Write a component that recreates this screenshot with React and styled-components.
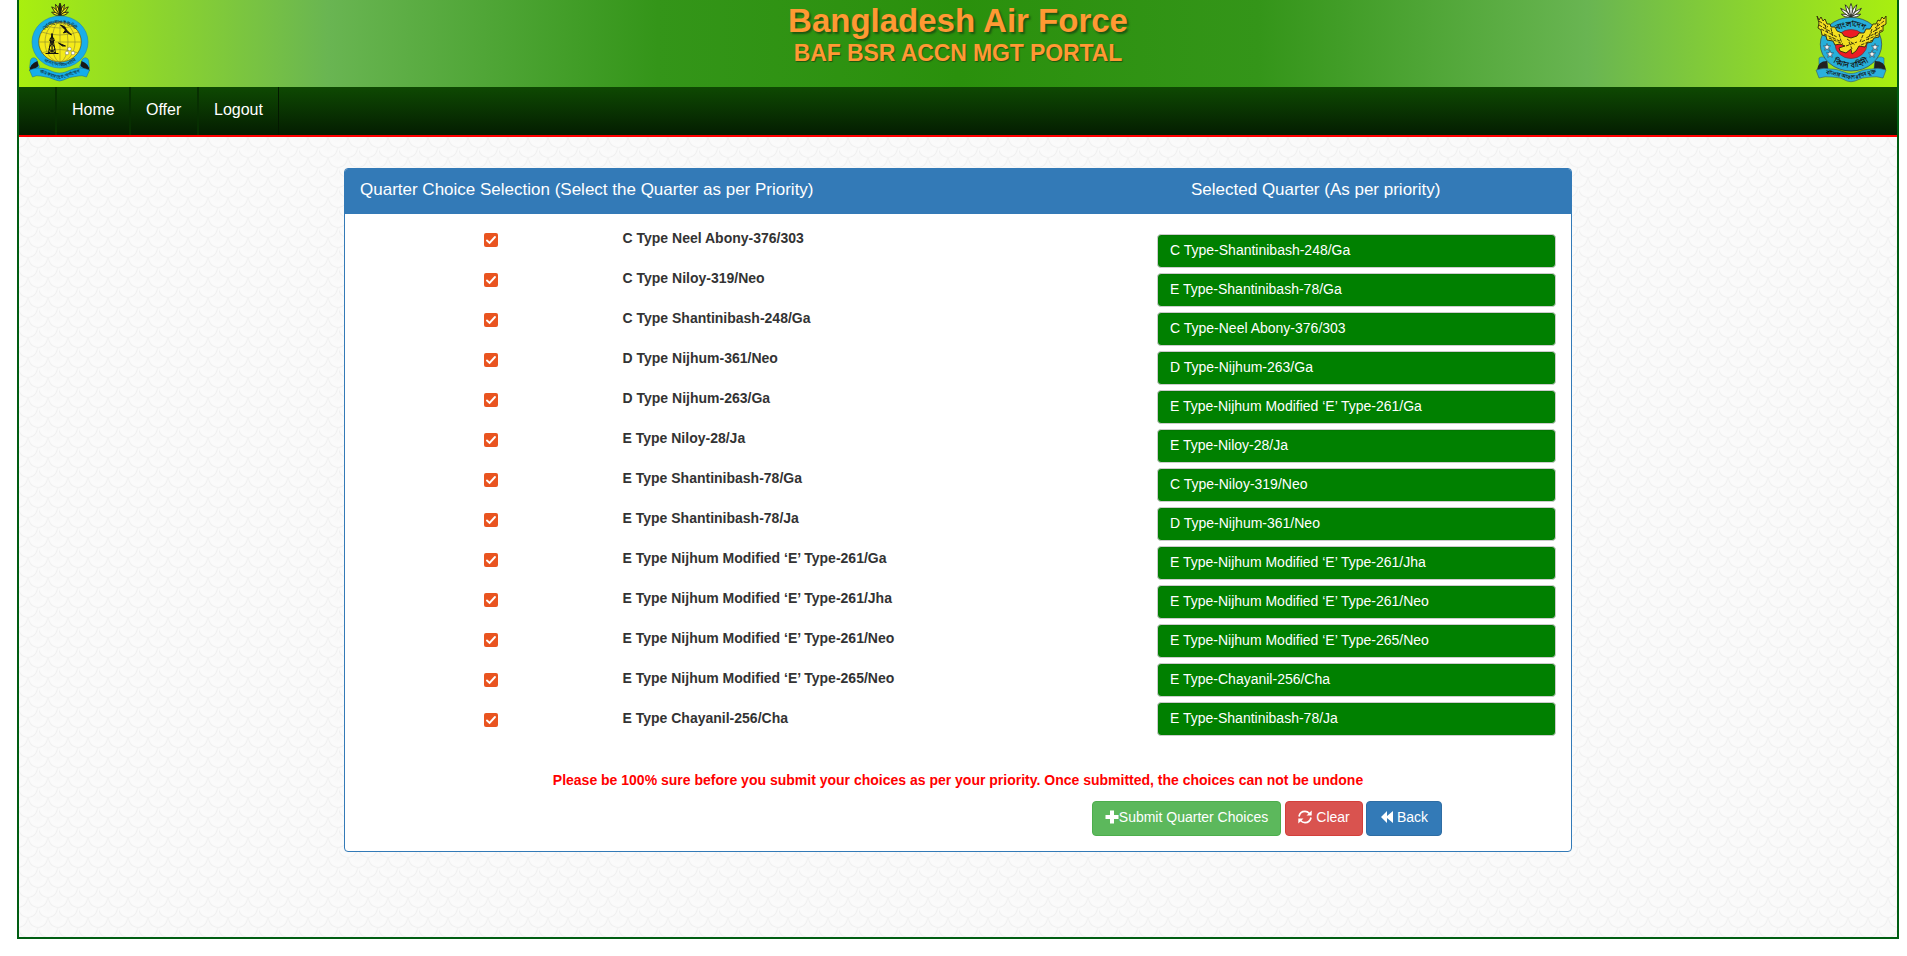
import React from 'react';
import styled, { createGlobalStyle } from 'styled-components';

const Global = createGlobalStyle`
  * { box-sizing: border-box; }
  body { margin: 0; background: #fff; color: #333; font: 14px/20px "Liberation Sans", Arial, sans-serif; overflow: hidden; }
`;
const scale = (cx, cy) => `<circle cx="${cx}" cy="${cy}" r="10.2" fill="url(#g)"/>`;
const tile = `<svg xmlns="http://www.w3.org/2000/svg" width="20" height="20"><defs><radialGradient id="g"><stop offset="0" stop-color="#f7f7f7"/><stop offset=".68" stop-color="#fbfbfb"/><stop offset=".84" stop-color="#f9f9f9"/><stop offset=".9" stop-color="#f0f0f0"/><stop offset="1" stop-color="#f5f5f5"/></radialGradient></defs><rect width="20" height="20" fill="#f6f6f6"/>${[
  [9, 19], [-1, 9], [19, 9], [9, -1], [-1, -11], [19, -11],
].map(([x, y]) => scale(x, y)).join('')}</svg>`;

const Page = styled.div`
  width: 1882px; height: 939px; margin-left: 17px;
  border: 2px solid #005d12; border-top: 0;
  background: #f7f7f7 url('data:image/svg+xml,${encodeURIComponent(tile)}') 0 9px;
`;
const Banner = styled.header`
  height: 87px; display: grid; grid-template-columns: 1fr auto 1fr; align-items: start;
  padding: 2px 10px 0 10px;
  background: linear-gradient(90deg, #a9ef0f 0, #69b552 16.5%, #349519 34%, #2a900c 50%, #349519 66%, #69b552 83.5%, #a9ef0f 100%);
  > svg:last-child { justify-self: end; }
`;
const Titles = styled.div`padding-top: 1px; text-align: center; font-weight: bold; color: #ff9933;`;
const Title = styled.h1`margin: 0; font-size: 33px; line-height: 36px; text-shadow: 2px 2px 2px #1d5510;`;
const Subtitle = styled.h2`margin: 0; font-size: 23px; line-height: 28px; letter-spacing: -.1px; text-shadow: 1px 1px 1px #1d5510;`;
const Nav = styled.nav`
  height: 50px; display: flex; padding-left: 36px; border-bottom: 2px solid #f00;
  background: linear-gradient(#0e4902, #041d01);
`;
const NavItem = styled.a`
  height: 48px; padding: 0 15px; width: ${(p) => p.$w}px; line-height: 45px; font-size: 16px; color: #fff; white-space: nowrap;
  border-left: 2px solid #072f01; border-right: ${(p) => (p.$last ? '1px solid #031800' : '0')};
`;
const Panel = styled.section`
  width: 1228px; height: 684px; margin: 31px 0 0 325px;
  background: #fff; border: 1px solid #337ab7; border-radius: 4px;
`;
const PanelHead = styled.div`
  height: 45px; background: #337ab7; color: #fff; font-size: 17px; line-height: 19px;
  display: flex; padding: 11px 15px; border-radius: 3px 3px 0 0;
`;
const HeadText = styled.div`width: ${(p) => (p.$w ? `${p.$w}px` : 'auto')}; white-space: nowrap;`;
const Columns = styled.div`display: flex; height: 535px;`;
const Choices = styled.div`width: 812px; padding-top: 14px;`;
const Choice = styled.label`height: 40px; display: flex; font-weight: bold;`;
const Box = styled.span`
  width: 14px; height: 14px; margin: 5px 124.5px 0 139px; border-radius: 2px; background: #e95420; flex: none;
  svg { display: block; }
`;
const Selected = styled.div`padding-top: 20px; width: 399px; display: flex; flex-direction: column; gap: 5px;`;
const Slot = styled.div`
  height: 34px; border: 1px solid #ccc; border-radius: 4px; background: green; color: #fff;
  padding: 5px 12px 7px; line-height: 20px; box-shadow: inset 0 1px 1px rgba(0,0,0,.075);
`;
const Warning = styled.p`margin: 21px 0 11px; text-align: center; color: #f00; font-weight: bold; line-height: 20px;`;
const Actions = styled.div`display: flex; padding-left: 747px;`;
const Button = styled.button`
  width: ${(p) => p.$w}px; height: 35px; margin-right: ${(p) => p.$gap || 0}px; padding: 0 0 3px; display: flex; align-items: center; justify-content: center;
  gap: ${(p) => p.$space || 0}px; font: 14px/20px "Liberation Sans", Arial, sans-serif; color: #fff; white-space: nowrap;
  background: ${(p) => p.$bg}; border: 1px solid ${(p) => p.$edge}; border-radius: 4px;
`;

const choices = ['C Type Neel Abony-376/303', 'C Type Niloy-319/Neo', 'C Type Shantinibash-248/Ga', 'D Type Nijhum-361/Neo', 'D Type Nijhum-263/Ga', 'E Type Niloy-28/Ja', 'E Type Shantinibash-78/Ga', 'E Type Shantinibash-78/Ja', 'E Type Nijhum Modified ‘E’ Type-261/Ga', 'E Type Nijhum Modified ‘E’ Type-261/Jha', 'E Type Nijhum Modified ‘E’ Type-261/Neo', 'E Type Nijhum Modified ‘E’ Type-265/Neo', 'E Type Chayanil-256/Cha'];
const selected = ['C Type-Shantinibash-248/Ga', 'E Type-Shantinibash-78/Ga', 'C Type-Neel Abony-376/303', 'D Type-Nijhum-263/Ga', 'E Type-Nijhum Modified ‘E’ Type-261/Ga', 'E Type-Niloy-28/Ja', 'C Type-Niloy-319/Neo', 'D Type-Nijhum-361/Neo', 'E Type-Nijhum Modified ‘E’ Type-261/Jha', 'E Type-Nijhum Modified ‘E’ Type-261/Neo', 'E Type-Nijhum Modified ‘E’ Type-265/Neo', 'E Type-Chayanil-256/Cha', 'E Type-Shantinibash-78/Ja'];

const leaf = (cx, cy, angle, len, fill) => (
  <path key={`${angle}-${len}`} transform={`translate(${cx} ${cy}) rotate(${angle})`} d={`M0 0Q-2.600 ${-len * 0.6} 0 ${-len}Q2.600 ${-len * 0.6} 0 0Z`} fill={fill} stroke="#1a1a10" strokeWidth=".8" />
);

function UnitCrest() {
  return (
    <svg width="62" height="81" viewBox="28.500 2 62 81">
      <defs>
        <path id="unitTop" d="M37.500 42.500A22.200 21.500 0 0 1 81.500 42.500" />
        <path id="unitLow" d="M34.500 43.500A25 22.500 0 0 0 84.500 43.500" />
        <path id="unitRib" d="M34 73C45 72 51 78 59 78.500C68 78 73 72 85 73" />
      </defs>
      {[-68, -44, -22, 22, 44, 68].map((a) => leaf(59.5, 15.5, a, Math.abs(a) > 60 ? 9 : 12, '#f0e51a'))}
      {leaf(59.5, 15.5, 0, 12.5, '#26260c')}
      <path d="M30 60Q32 56 36 59L39 67 33 71 29 68ZM88 60Q86 56 82 59L79 67 85 71 89 68Z" fill="#15aeea" stroke="#17698c" strokeWidth=".4" />
      <path d="M37 61Q29 64 29 71L34 69 38 66ZM81 61Q89 64 89 71L84 69 80 66Z" fill="#171717" />
      <path d="M29 70Q34 68 38 68C48 68 52 73 59 73C67 73 70 68 80 68Q84 68 89 70L86 77Q81 75 78 76Q68 77 63 80Q59 82 55 80Q49 77 40 76Q36 75 32 77Z" fill="#15aeea" stroke="#17698c" strokeWidth=".5" />
      <ellipse cx="59.500" cy="42" rx="28" ry="26" fill="#19aeea" stroke="#2386ac" strokeWidth=".6" />
      <ellipse cx="59.500" cy="42" rx="21.300" ry="20" fill="#f4ea19" stroke="#514f18" strokeWidth=".7" />
      <g fill="none" stroke="#8a8730" strokeWidth=".6">
        <path d="M38 42H81M59.500 22V62M41 32Q59 38 78 32M41 53Q59 46 78 53M46 26Q59 30 73 26" />
        <ellipse cx="59.500" cy="42" rx="15" ry="20" /><ellipse cx="59.500" cy="42" rx="8" ry="20" />
      </g>
      <g stroke="#111" fill="none" strokeWidth="1"><path d="M51.500 34L48 53M51.500 34L55 53M51.500 33V53M49 40L54 47M54 40L49 47M48 49L55 53M55 49L48 53M45 53.500H58" /><circle cx="51.500" cy="39.500" r="2" /></g>
      <path d="M60 25Q65 26 66 30L71 35 66 32 63 33 65 30ZM58 43L65 46 62 46Z" fill="#111" stroke="#111" />
      <g fill="#fff" stroke="#555" strokeWidth=".4"><circle cx="69" cy="49" r="1.800" /><circle cx="66.500" cy="53" r="1.800" /><circle cx="72.500" cy="53" r="1.800" /></g>
      <g fill="#143642" textAnchor="middle" fontFamily="sans-serif" fontWeight="bold">
        <text fontSize="4.800"><textPath href="#unitTop" startOffset="50%">যোগাযোগ ইউনিট</textPath></text>
        <text fontSize="4"><textPath href="#unitLow" startOffset="50%">বাংলাদেশ বিমান বাহিনী</textPath></text>
        <text fontSize="4.400"><textPath href="#unitRib" startOffset="50%">জয় করার তরে যোগাযোগ</textPath></text>
      </g>
    </svg>
  );
}

function ForceCrest() {
  const star = (x, y) => <path key={`${x}-${y}`} transform={`translate(${x} ${y})`} d="M0-3.500L1-1 3.500-1 1.500.8 2.200 3.400 0 1.800-2.200 3.400-1.500.8-3.500-1-1-1Z" fill="#f4f4f4" stroke="#234" strokeWidth=".6" />;
  return (
    <svg width="74" height="82" viewBox="1814 2 74 82">
      <defs>
        <path id="forceTop" d="M1830 44A22 17.500 0 0 1 1874 44" />
        <path id="forceLow" d="M1825.500 44A26.500 23.500 0 0 0 1878.500 44" />
        <path id="forceRib" d="M1817 74C1835 72 1841 79 1852 79C1863 79 1869 72 1887 74" />
      </defs>
      {[-74, -50, -25, 25, 50, 74, 0].map((a) => leaf(1852, 17, a, Math.abs(a) > 60 ? 10 : 13.5, '#fff'))}
      <path d="M1820 58Q1824 55 1828 60L1829 69 1820 70ZM1885 58Q1880 55 1876 60L1875 69 1885 70Z" fill="#29b2db" stroke="#27596b" strokeWidth=".5" />
      <path d="M1828 61Q1819 61 1818 70L1829 69ZM1876 61Q1886 61 1887 70L1875 69Z" fill="#222" />
      <ellipse cx="1852" cy="44.200" rx="30.700" ry="26.800" fill="#27afd9" stroke="#37515b" strokeWidth=".8" />
      <ellipse cx="1852" cy="44" rx="16" ry="14.500" fill="#ed1c24" stroke="#5b3a42" strokeWidth=".7" />
      <path d="M1817 70Q1825 67 1831 69C1842 69 1845 73.500 1852 73.500C1859 73.500 1862 69 1873 69Q1879 67 1887 70L1884 78Q1877 76 1872 77Q1863 77 1856 81Q1852 82.500 1848 81Q1842 77 1833 77Q1826 76 1820 78Z" fill="#2ab0dd" stroke="#355b69" strokeWidth=".6" />
      <g fill="#151515" textAnchor="middle" fontFamily="sans-serif" fontWeight="bold">
        <text fontSize="7.500"><textPath href="#forceTop" startOffset="50%">বাংলাদেশ</textPath></text>
        <text fontSize="7.500"><textPath href="#forceLow" startOffset="50%">বিমান বাহিনী</textPath></text>
        <text fontSize="5.200"><textPath href="#forceRib" startOffset="50%">বাংলার আকাশ রাখিব মুক্ত</textPath></text>
      </g>
      <path d="M1818 16L1820 20 1822 17 1824 21 1826 19 1828 24 1831 24 1832 27 1836 27 1838 31 1843 33 1845 36 1852 38 1858 36 1860 33 1865 33 1867 29 1871 29 1874 24 1877 24 1879 20 1881 21 1883 17 1885 19 1887 16 1887 24 1884 26 1884 31 1880 33 1880 37 1875 38 1873 42 1868 43 1866 47 1860 46 1857 51 1853 54 1852 49 1847 53 1841 51 1840 48 1846 46 1841 44 1836 45 1834 41 1828 40 1827 36 1823 35 1822 30 1819 28 1820 23Z" fill="#f3df20" stroke="#2c270a" strokeWidth=".9" />
      <path d="M1820 21L1829 27M1820 25L1834 33M1822 29L1838 37M1825 34L1843 42M1830 38L1844 44M1885 21L1876 28M1885 25L1872 33M1883 30L1867 38M1879 35L1862 42M1874 40L1862 45M1826 25L1829 34M1832 28L1834 38M1840 34L1842 41M1879 23L1876 35M1873 29L1869 40M1864 35L1861 42M1848 39L1856 45M1847 46L1858 42M1850 42L1853 49" stroke="#2c270a" strokeWidth=".9" strokeDasharray="3.500 1.200" fill="none" />
      {star(1828, 47)}{star(1831, 54)}{star(1876, 47)}{star(1873, 54)}
    </svg>
  );
}

const Plus = () => <svg width="14" height="14" viewBox="0 0 14 14"><path d="M5 .5h4v4.500h4.500v4H9v4.500H5V9H.5V5H5Z" fill="#fff" /></svg>;
const Refresh = () => <svg width="14" height="14" viewBox="0 0 14 14"><path d="M1 6.500Q2 1.400 7 1.400Q9.500 1.400 11.500 3.500M13 7.500Q12 12.600 7 12.600Q4.500 12.600 2.500 10.500" fill="none" stroke="#fff" strokeWidth="1.700" /><path d="M13.700.5V5.500H8.500ZM.3 13.500V8.500H5.500Z" fill="#fff" /></svg>;
const Backward = () => <svg width="14" height="14" viewBox="0 0 14 14"><path d="M1 7L7 1V6L13 1V13L7 8V13Z" fill="#fff" /></svg>;

export default function App() {
  return (
    <>
      <Global />
      <Page>
        <Banner>
          <UnitCrest />
          <Titles>
            <Title>Bangladesh Air Force</Title>
            <Subtitle>BAF BSR ACCN MGT PORTAL</Subtitle>
          </Titles>
          <ForceCrest />
        </Banner>
        <Nav>
          <NavItem $w={74}>Home</NavItem>
          <NavItem $w={68}>Offer</NavItem>
          <NavItem $w={82} $last>Logout</NavItem>
        </Nav>
        <Panel>
          <PanelHead>
            <HeadText $w={831}>Quarter Choice Selection (Select the Quarter as per Priority)</HeadText>
            <HeadText>Selected Quarter (As per priority)</HeadText>
          </PanelHead>
          <Columns>
            <Choices>
              {choices.map((c) => (
                <Choice key={c}>
                  <Box><svg width="14" height="14" viewBox="0 0 14 14"><path d="M3 7.500L5.600 10 11 4" fill="none" stroke="#fff" strokeWidth="1.900" strokeLinecap="round" /></svg></Box>
                  {c}
                </Choice>
              ))}
            </Choices>
            <Selected>{selected.map((s) => <Slot key={s}>{s}</Slot>)}</Selected>
          </Columns>
          <Warning>Please be 100% sure before you submit your choices as per your priority. Once submitted, the choices can not be undone</Warning>
          <Actions>
            <Button $w={189} $gap={4} $bg="#5cb85c" $edge="#4cae4c"><Plus />Submit Quarter Choices</Button>
            <Button $w={78} $gap={3} $space={4} $bg="#d9534f" $edge="#d43f3a"><Refresh />Clear</Button>
            <Button $w={76} $space={3} $bg="#337ab7" $edge="#2e6da4"><Backward />Back</Button>
          </Actions>
        </Panel>
      </Page>
    </>
  );
}
